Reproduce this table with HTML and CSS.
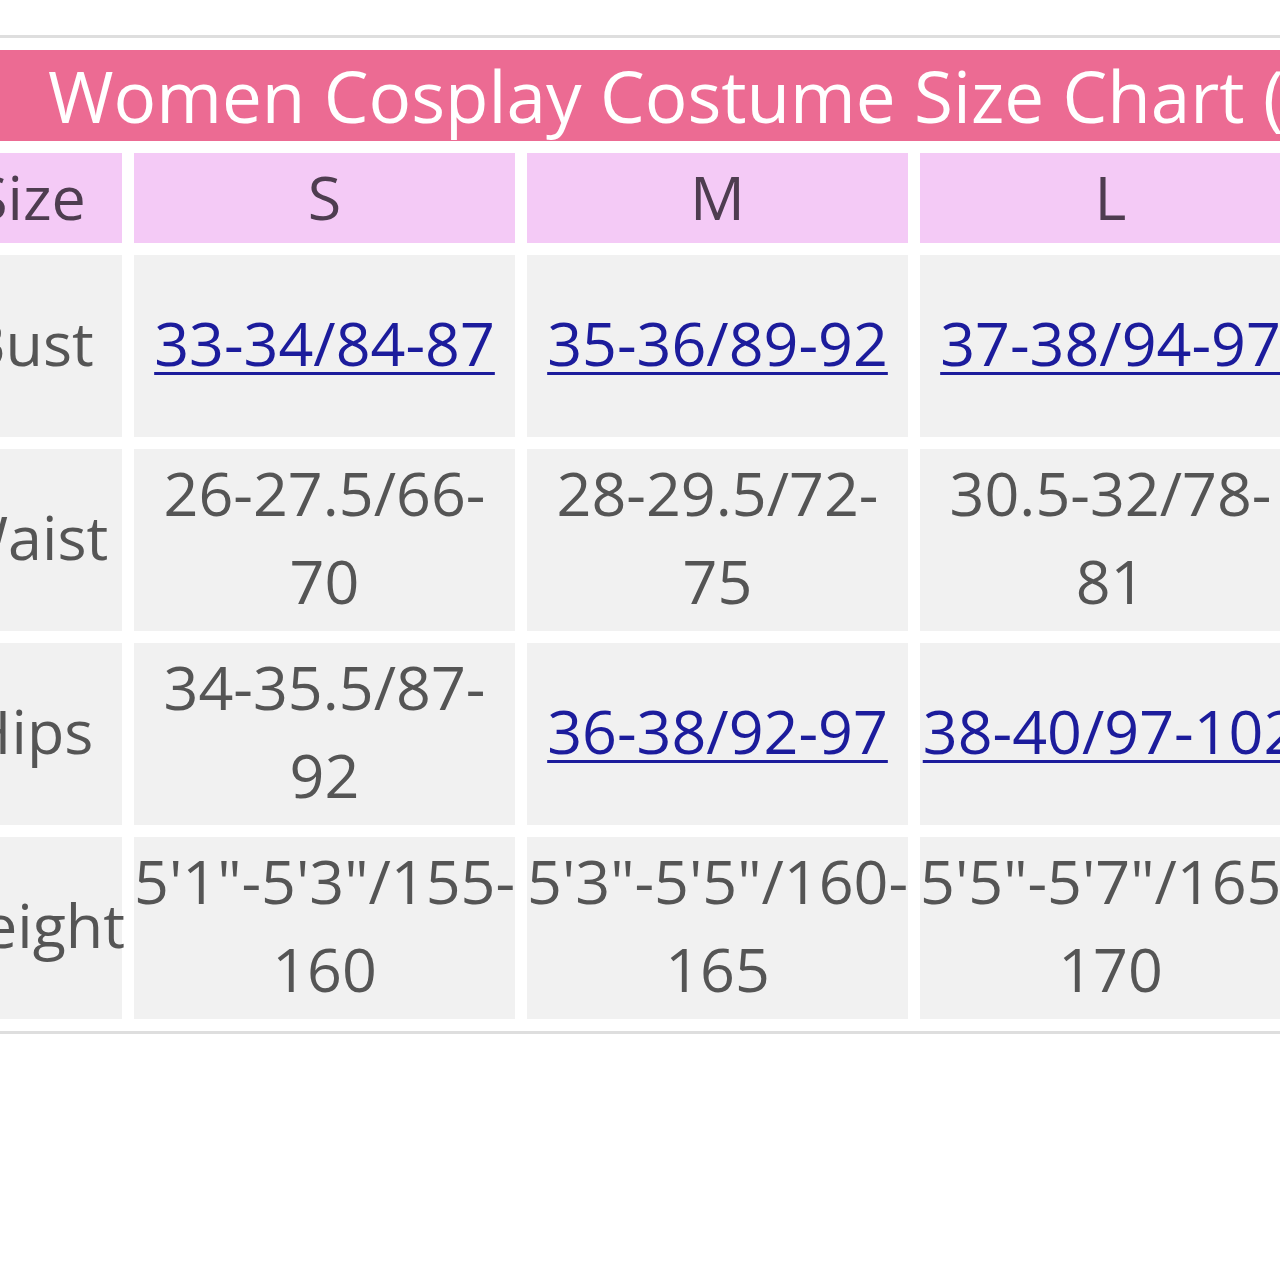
FILE: index.html
```html
<!DOCTYPE html>
<html lang="en">
<head>
<meta charset="utf-8">
<title>Women Cosplay Costume Size Chart</title>
<link rel="stylesheet" href="styles.css">
</head>
<body>
<div class="viewport">
  <table class="chart">
    <colgroup>
      <col class="col-label">
      <col class="col-size">
      <col class="col-size">
      <col class="col-size">
    </colgroup>
    <tr>
      <td class="title" colspan="4">Women Cosplay Costume Size Chart (Inch/CM)</td>
    </tr>
    <tr class="head">
      <td>Size</td>
      <td>S</td>
      <td>M</td>
      <td>L</td>
    </tr>
    <tr class="row">
      <td>Bust</td>
      <td><a href="#">33-34/84-87</a></td>
      <td><a href="#">35-36/89-92</a></td>
      <td><a href="#">37-38/94-97</a></td>
    </tr>
    <tr class="row">
      <td>Waist</td>
      <td>26-27.5/66-<wbr>70</td>
      <td>28-29.5/72-<wbr>75</td>
      <td>30.5-32/78-<wbr>81</td>
    </tr>
    <tr class="row">
      <td>Hips</td>
      <td>34-35.5/87-<wbr>92</td>
      <td><a href="#">36-38/92-97</a></td>
      <td><a href="#">38-40/97-102</a></td>
    </tr>
    <tr class="row">
      <td>Height</td>
      <td>5'1"-5'3"/155-<wbr>160</td>
      <td>5'3"-5'5"/160-<wbr>165</td>
      <td>5'5"-5'7"/165-<wbr>170</td>
    </tr>
  </table>
</div>
</body>
</html>
```
FILE: styles.css
```css
html, body {
  margin: 0;
  padding: 0;
  background: #ffffff;
}

.viewport {
  width: 1280px;
  height: 1280px;
  overflow: hidden;
  padding-top: 35px;
  box-sizing: border-box;
}

.chart {
  table-layout: fixed;
  width: 1387px;
  margin-left: -74px;
  border-collapse: separate;
  border-spacing: 12px 12px;
  border-top: 3px solid #dedede;
  border-bottom: 3px solid #dedede;
  font-family: "Open Sans", "Noto Sans", sans-serif;
  font-size: 61px;
  line-height: 88px;
  color: #555555;
}

.col-label { width: 184px; }
.col-size { width: 381px; }

.chart td {
  padding: 0;
  text-align: center;
  vertical-align: middle;
}

.chart .title {
  height: 91px;
  background: #ec6b93;
  color: #ffffff;
  font-size: 71px;
  line-height: 86px;
  text-align: left;
  padding-left: 110px;
  white-space: nowrap;
  overflow: hidden;
}

.head td {
  height: 88px;
  padding-bottom: 2px;
  background: #f4caf6;
  color: #4e3d50;
}

.row td {
  height: 176px;
  padding-bottom: 6px;
  background: #f1f1f1;
}

.row a {
  color: #1c1c9c;
  text-decoration: underline;
  text-decoration-thickness: 3px;
  text-underline-offset: 6px;
}
```
